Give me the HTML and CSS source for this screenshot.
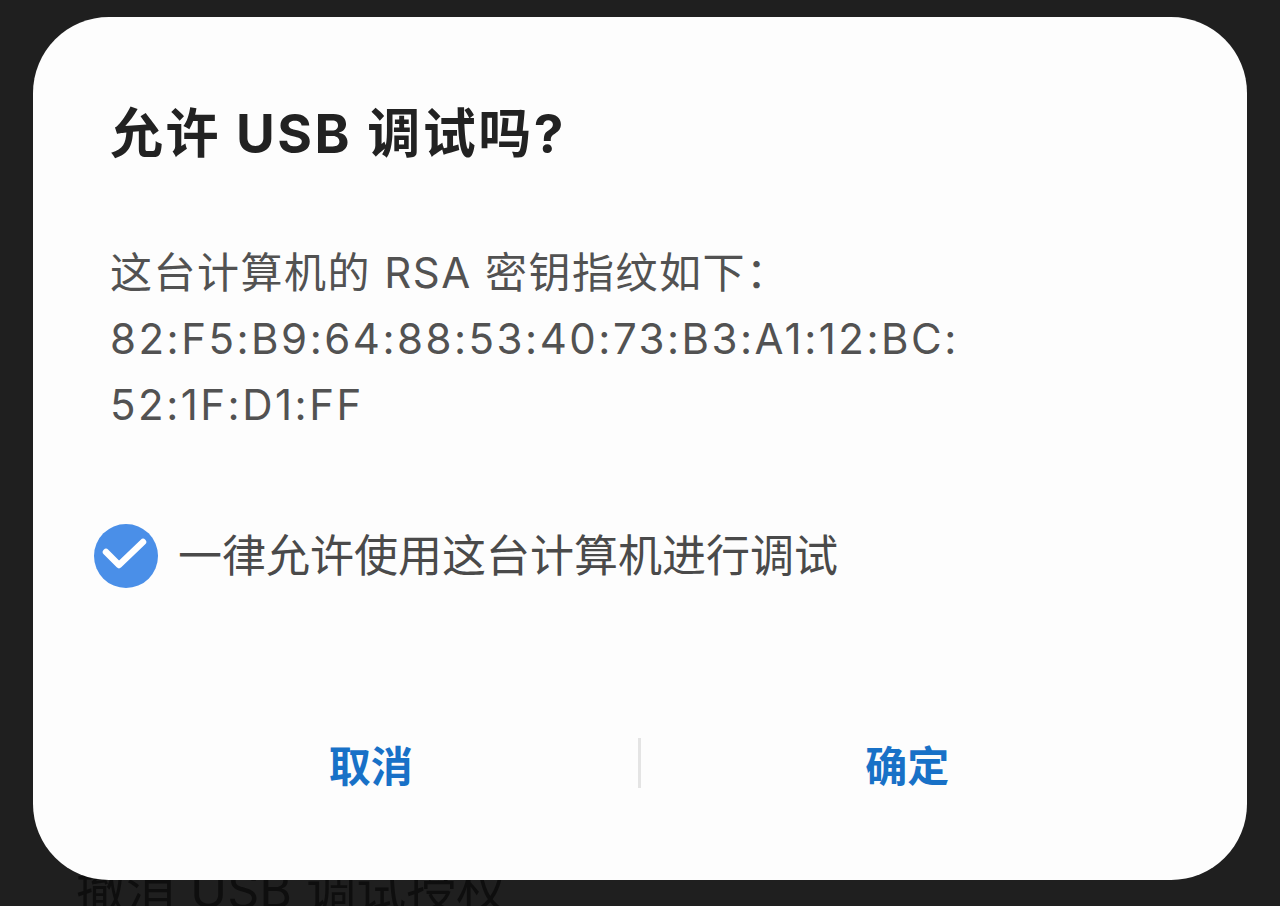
FILE: index.html
```html
<!DOCTYPE html>
<html lang="zh-CN">
<head>
  <meta charset="UTF-8">
  <meta name="viewport" content="width=device-width, initial-scale=1.0">
  <title>允许 USB 调试吗?</title>
  <link rel="stylesheet" href="styles.css">
</head>
<body>

  <div class="screen">
    <div class="settings-list">
      <div class="settings-item">撤消 USB 调试授权</div>
    </div>

    <div class="dialog">
      <h1 class="dialog-title">允许 USB 调试吗?</h1>
      <p class="dialog-message">这台计算机的 RSA 密钥指纹如下：<br><span class="fingerprint">82:F5:B9:64:88:53:40:73:B3:A1:12:BC:<br>52:1F:D1:FF</span></p>

      <label class="check-row">
        <span class="check-icon">
          <svg width="64" height="64" viewBox="0 0 64 64">
            <circle cx="32" cy="32" r="32" fill="#4a8fe8"/>
            <path d="M12 28 L25 41 L49 18" fill="none" stroke="#fff" stroke-width="6.5" stroke-linecap="round" stroke-linejoin="round"/>
          </svg>
        </span>
        <span class="check-label">一律允许使用这台计算机进行调试</span>
      </label>

      <div class="dialog-buttons">
        <button class="dialog-btn">取消</button>
        <span class="btn-divider"></span>
        <button class="dialog-btn">确定</button>
      </div>
    </div>
  </div>

</body>
</html>
```

FILE: styles.css
```css
/* General Styles */
body {
  margin: 0;
  padding: 0;
  background: #1f1f1f;
  font-family: 'Inter', 'Noto Sans CJK SC', sans-serif;
  overflow: hidden;
}

.screen {
  position: relative;
  width: 1280px;
  height: 906px;
}

/* settings page under the dialog */
.settings-list {
  display: flex;
  flex-direction: column;
  justify-content: flex-end;
  height: 100%;
  padding: 0 0 0 76px;
  box-sizing: border-box;
}

.settings-item {
  font-size: 50px;
  line-height: 60px;
  margin-bottom: -14px;
  color: #0e0e0e;
}

/* Dialog */
.dialog {
  position: absolute;
  left: 33px;
  top: 17px;
  width: 1214px;
  height: 863px;
  box-sizing: border-box;
  padding: 82px 0 0 77px;
  background: #fdfdfd;
  border-radius: 76px;
  display: flex;
  flex-direction: column;
}

.dialog-title {
  margin: 0;
  font-size: 53px;
  line-height: 70px;
  font-weight: 700;
  letter-spacing: 2.5px;
  color: #222;
}

.dialog-message {
  margin: 71px 0 0;
  font-size: 42px;
  line-height: 66px;
  letter-spacing: 1.5px;
  color: #525252;
}

.fingerprint {
  letter-spacing: 2.5px;
}

.check-row {
  display: flex;
  align-items: center;
  gap: 20px;
  margin: 86px 0 0 -16px;
}

.check-icon {
  display: flex;
  width: 64px;
  height: 64px;
}

.check-label {
  font-size: 44px;
  line-height: 64px;
  color: #4a4a4a;
}

.dialog-buttons {
  display: flex;
  align-items: center;
  height: 90px;
  margin: 130px 0 0 -6px;
  padding-right: 73px;
}

.dialog-btn {
  flex: 1;
  height: 90px;
  border: none;
  background: none;
  font-family: inherit;
  font-size: 42px;
  font-weight: 700;
  color: #1871c7;
  padding: 0;
}

.btn-divider {
  width: 3px;
  height: 50px;
  background: #e4e4e4;
}
```
